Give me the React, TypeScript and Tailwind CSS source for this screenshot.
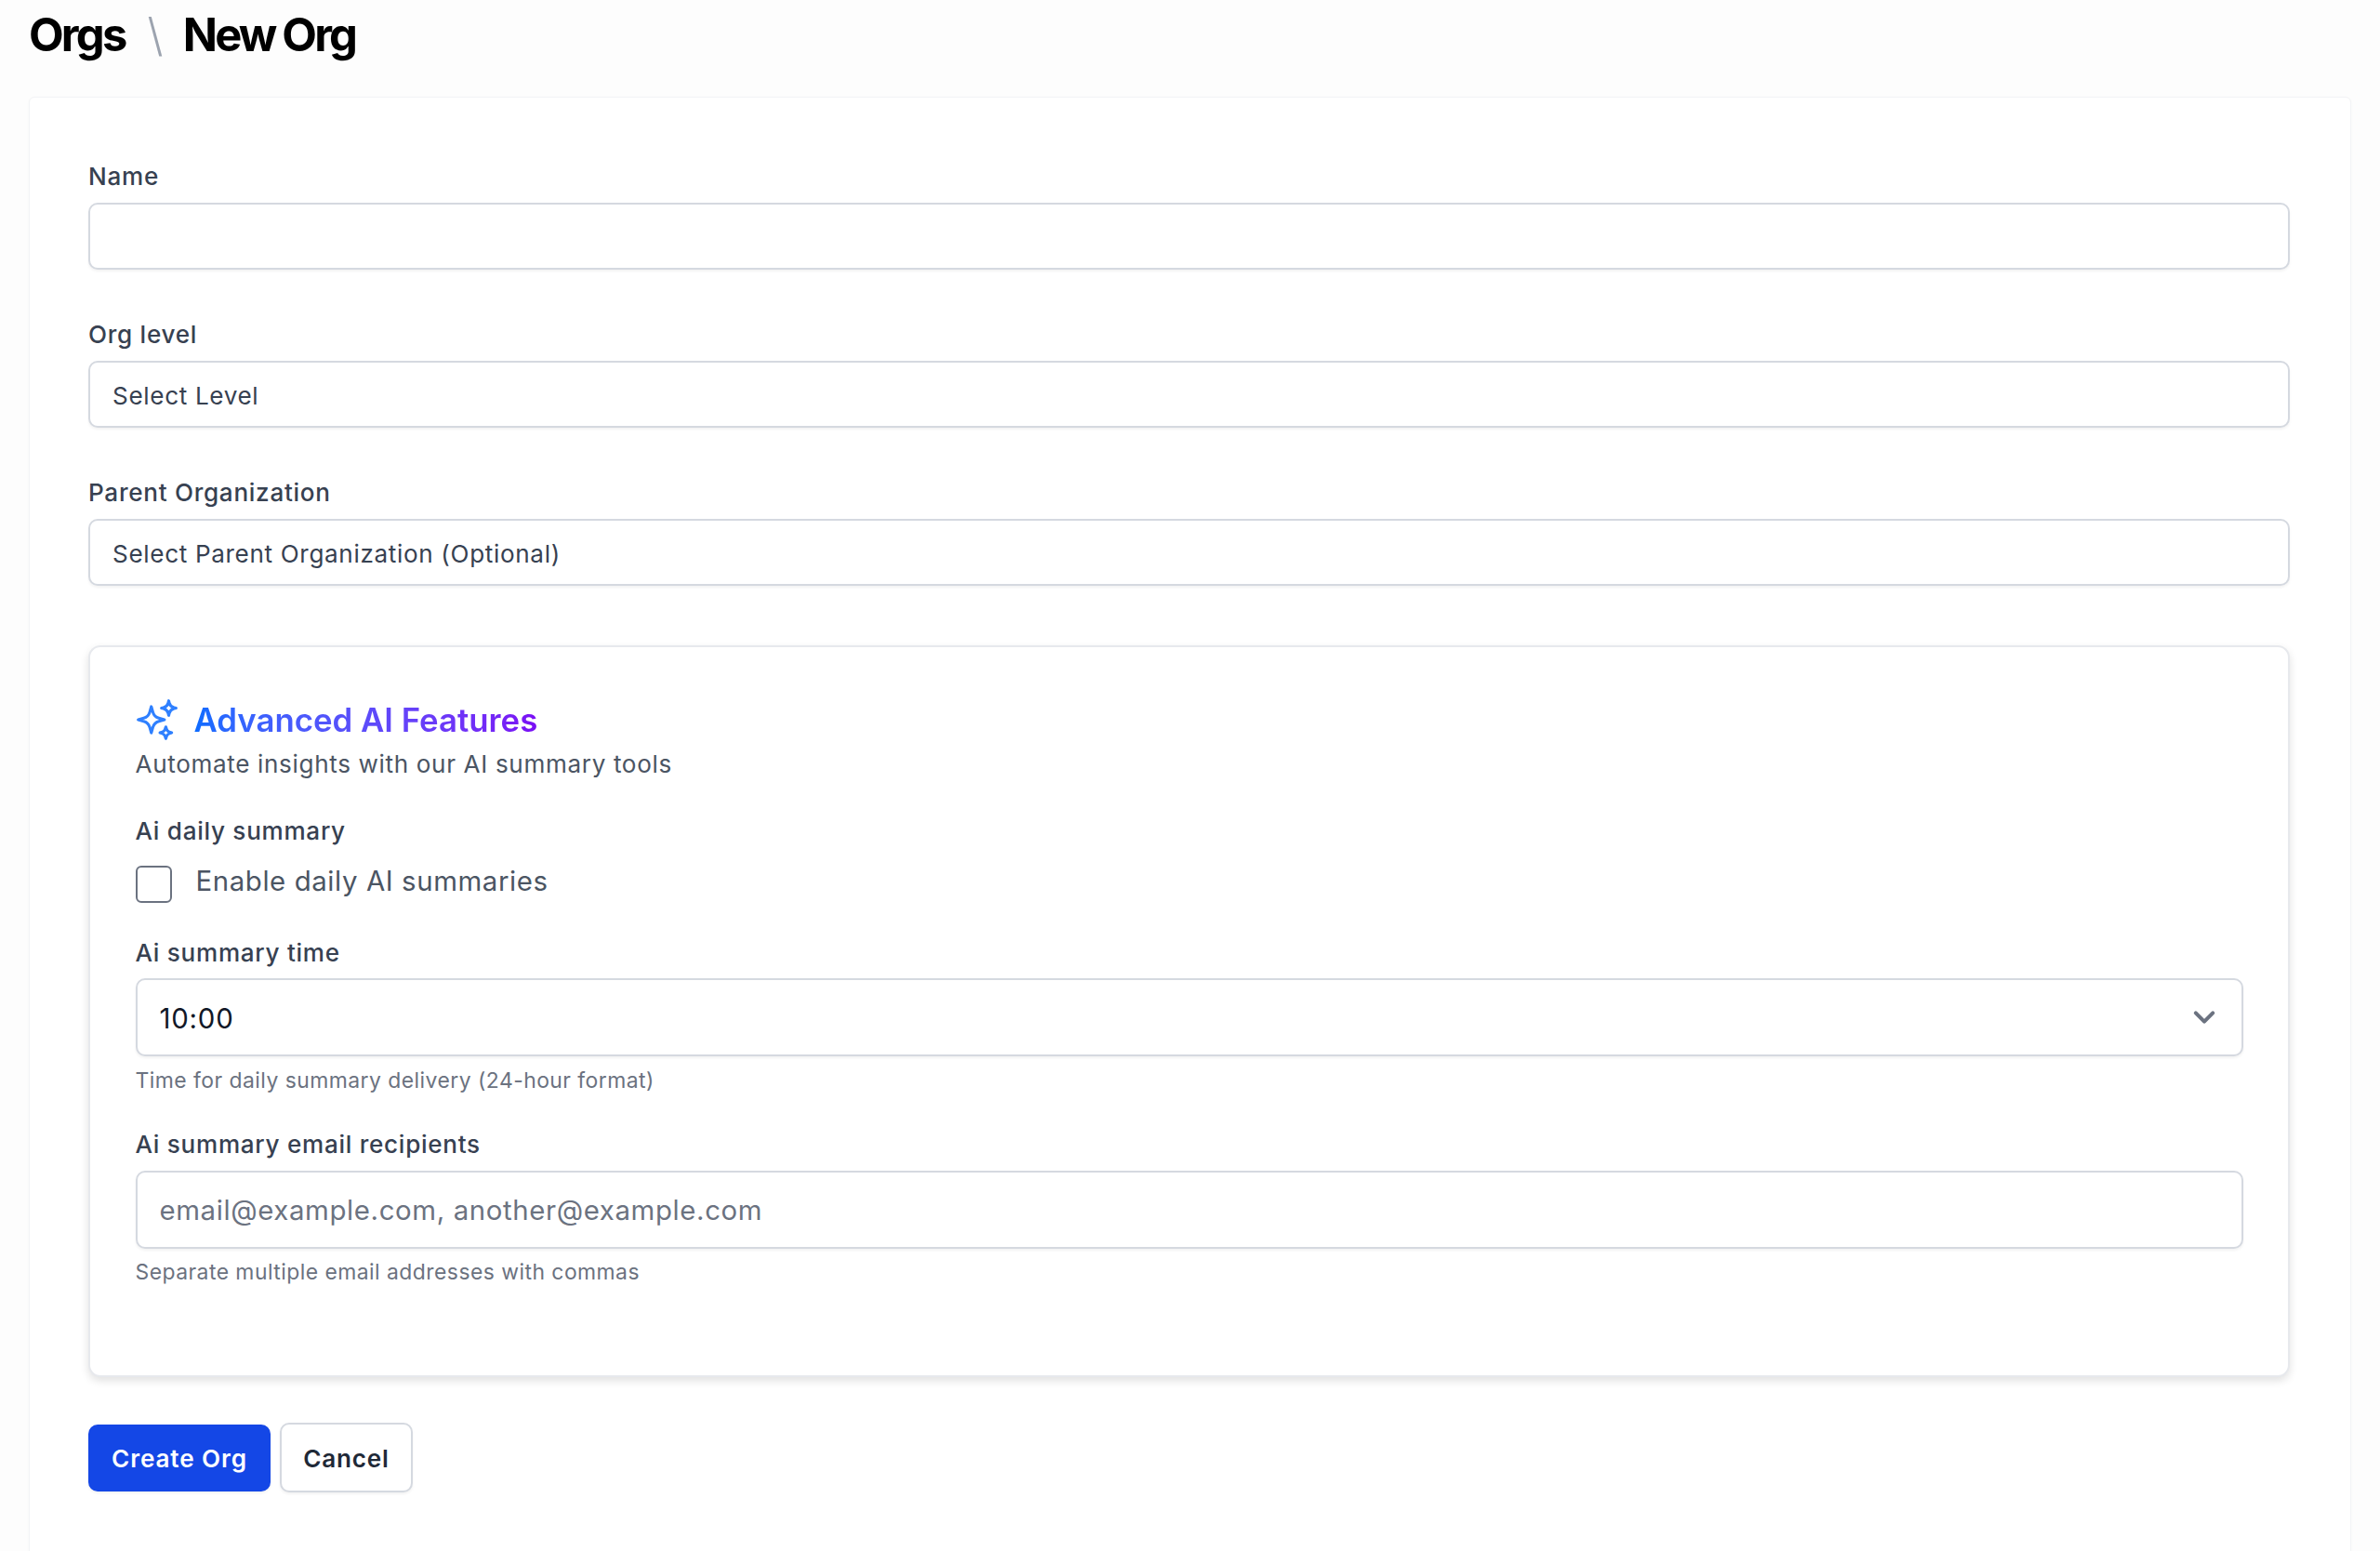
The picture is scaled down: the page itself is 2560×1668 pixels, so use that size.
export default function App() {
  const labelCls = "block text-[#374151] text-[26.1px] leading-[33px] font-medium tracking-[0.72px]";
  const inputCls = "block w-full rounded-[10px] border-[2px] border-[#d5d9e0] bg-white shadow-[0_2px_3px_rgba(0,0,0,0.05)] outline-none";
  return (
    <div className="h-[1668px] overflow-hidden bg-[#fdfdfd] font-['Inter',sans-serif] pl-[31px] pr-[31px]">
      <div className="h-[76px] pt-[12px] flex items-start text-[48.9px] leading-[52px] font-bold text-black tracking-[-2.8px] [word-spacing:-1px]">
        <span>Orgs</span>
        <span className="ml-[24px] mr-[24px] font-light text-[#9ca3af]">\</span>
        <span>New Org</span>
      </div>
      <div className="mt-[28px] h-[1600px] rounded-[6px] border border-[#f3f4f6] bg-white shadow-[0_1px_3px_rgba(0,0,0,0.03)] pl-[63px] pr-[65px] pt-[68px]">
        <label className={labelCls}>Name</label>
        <input type="text" className={inputCls + " mt-[12px] h-[72px] px-[24px]"} />
        <label className={labelCls + " mt-[53px]"}>Org level</label>
        <div className={inputCls + " mt-[12px] h-[72px] px-[24px] pt-[3px] flex items-center text-[26.1px] tracking-[0.66px] text-[#374151]"}>Select Level</div>
        <label className={labelCls + " mt-[53px]"}>Parent Organization</label>
        <div className={inputCls + " mt-[12px] h-[72px] px-[24px] pt-[3px] flex items-center text-[26.1px] tracking-[0.66px] text-[#374151]"}>Select Parent Organization (Optional)</div>

        <div className="mt-[64px] h-[787px] rounded-[13px] border-[2px] border-[#e7e9ed] bg-white shadow-[0_4px_10px_rgba(0,0,0,0.12)] pl-[48.5px] pr-[48px] pt-[56px]">
          <div className="flex items-center h-[44px]">
            <svg viewBox="0 0 24 24" fill="none" stroke="#2f80ff" strokeWidth="1.5" strokeLinecap="round" strokeLinejoin="round" className="w-[50px] h-[50px] -ml-[2px] shrink-0">
              <path d="M9.813 15.904 9 18.75l-.813-2.846a4.5 4.5 0 0 0-3.09-3.09L2.25 12l2.846-.813a4.5 4.5 0 0 0 3.09-3.09L9 5.25l.813 2.846a4.5 4.5 0 0 0 3.09 3.09L15.75 12l-2.846.813a4.5 4.5 0 0 0-3.09 3.09ZM18.259 8.715 18 9.75l-.259-1.035a3.375 3.375 0 0 0-2.455-2.456L14.25 6l1.036-.259a3.375 3.375 0 0 0 2.455-2.456L18 2.25l.259 1.035a3.375 3.375 0 0 0 2.456 2.456L21.75 6l-1.035.259a3.375 3.375 0 0 0-2.456 2.456ZM16.894 20.567 16.5 21.75l-.394-1.183a2.25 2.25 0 0 0-1.423-1.423L13.5 18.75l1.183-.394a2.25 2.25 0 0 0 1.423-1.423l.394-1.183.394 1.183a2.25 2.25 0 0 0 1.423 1.423l1.183.394-1.183.394a2.25 2.25 0 0 0-1.423 1.423Z" />
            </svg>
            <h2 className="ml-[15px] text-[34.8px] leading-[44px] font-semibold bg-gradient-to-r from-[#0b6cff] to-[#7a0cf5] bg-clip-text text-transparent">Advanced AI Features</h2>
          </div>
          <p className="mt-[9px] text-[26.1px] leading-[33px] tracking-[0.65px] text-[#4b5563]">Automate insights with our AI summary tools</p>
          <label className={labelCls + " mt-[39px]"}>Ai daily summary</label>
          <div className="mt-[21px] flex items-start h-[39px]">
            <input type="checkbox" className="appearance-none w-[39px] h-[40px] rounded-[6px] border-[2px] border-[#6b7280] bg-white" />
            <span className="ml-[26px] text-[29.4px] leading-[34px] tracking-[0.59px] text-[#4b5563]">Enable daily AI summaries</span>
          </div>
          <label className={labelCls + " mt-[38px]"}>Ai summary time</label>
          <div className={inputCls + " mt-[11px] h-[84px] pl-[24px] pr-[29px] flex items-center justify-between text-[29.4px] tracking-[0.8px] text-[#111827]"}>
            <span className="pt-[5px]">10:00</span>
            <svg viewBox="0 0 20 20" fill="none" stroke="#6b7280" strokeWidth="1.75" strokeLinecap="round" strokeLinejoin="round" className="w-[46px] h-[46px] -mr-[12px]">
              <path d="M6 8l4 4 4-4" />
            </svg>
          </div>
          <p className="mt-[13px] text-[22.9px] leading-[26px] tracking-[0.47px] text-[#6b7280]">Time for daily summary delivery (24-hour format)</p>
          <label className={labelCls + " mt-[39px]"}>Ai summary email recipients</label>
          <input type="text" placeholder="email@example.com, another@example.com" className={inputCls + " mt-[12px] h-[84px] pl-[24px] pr-[24px] pt-[1px] text-[29.4px] tracking-[0.62px] text-[#111827] placeholder:text-[#6b7280]"} />
          <p className="mt-[12px] text-[22.9px] leading-[26px] tracking-[0.47px] text-[#6b7280]">Separate multiple email addresses with commas</p>
        </div>

        <div className="mt-[49px] flex items-center gap-[10px]">
          <button className="w-[196px] h-[72px] pt-[2px] rounded-[10px] bg-[#1447e6] text-white text-[26.1px] font-semibold tracking-[0.9px] shadow-[0_2px_3px_rgba(0,0,0,0.05)]">Create Org</button>
          <button className="w-[143px] h-[75px] pt-[2px] rounded-[10px] border-[2px] border-[#d5d9e0] bg-white text-[#1f2937] text-[26.1px] font-semibold tracking-[0.8px] shadow-[0_2px_3px_rgba(0,0,0,0.05)]">Cancel</button>
        </div>
      </div>
    </div>
  );
}
